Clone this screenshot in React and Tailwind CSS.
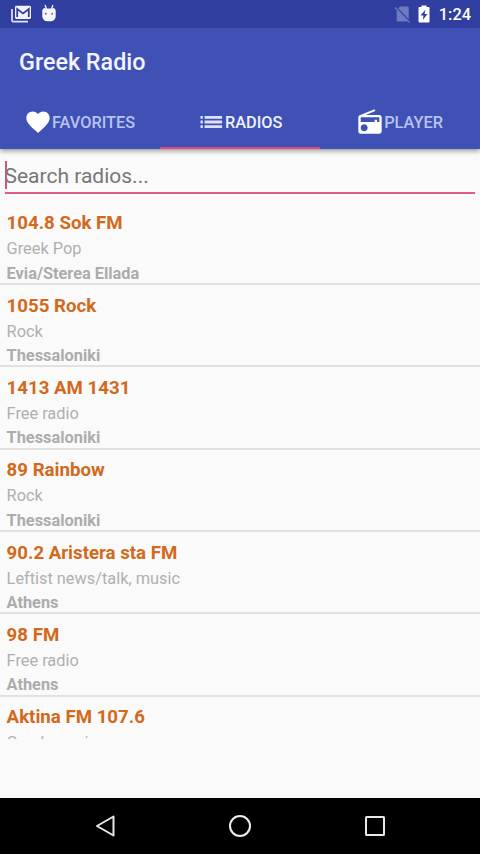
const stations = [
  ["104.8 Sok FM", "Greek Pop", "Evia/Sterea Ellada"],
  ["1055 Rock", "Rock", "Thessaloniki"],
  ["1413 AM 1431", "Free radio", "Thessaloniki"],
  ["89 Rainbow", "Rock", "Thessaloniki"],
  ["90.2 Aristera sta FM", "Leftist news/talk, music", "Athens"],
  ["98 FM", "Free radio", "Athens"],
  ["Aktina FM 107.6", "Greek music"],
];

const tabs = [
  {
    label: "FAVORITES",
    path: "M12 21.35l-1.45-1.32C5.4 15.36 2 12.28 2 8.5 2 5.42 4.42 3 7.5 3c1.74 0 3.41.81 4.5 2.09C13.09 3.81 14.76 3 16.5 3 19.58 3 22 5.42 22 8.5c0 3.78-3.4 6.86-8.55 11.54L12 21.35z",
  },
  {
    label: "RADIOS",
    active: true,
    path: "M3 13.200h2v-2.400H3v2.400zm0 4h2v-2.400H3v2.400zm0-8h2V6.800H3v2.400zm3.500 4h15v-2.400h-15v2.400zm0 4h15v-2.400h-15v2.400zm0-10.400v2.400h15V6.800h-15z",
  },
  {
    label: "PLAYER",
    path: "M3.24 6.15C2.51 6.43 2 7.17 2 8v12c0 1.1.89 2 2 2h16c1.11 0 2-.9 2-2V8c0-1.11-.89-2-2-2H8.3l8.26-3.34L15.88 1 3.24 6.15zM7 20c-1.66 0-3-1.34-3-3s1.34-3 3-3 3 1.34 3 3-1.34 3-3 3zm13-8h-2v-2h-2v2H4V8h16v4z",
  },
];

function StatusBar() {
  return (
    <div className="flex h-7 items-center bg-[#303f9f] pl-[11px] pr-[9px] text-white">
      <svg className="h-[18px] w-5" viewBox="0 0 20 18" fill="none">
        <path d="M1 4v11.5a1.2 1.2 0 0 0 1.2 1.2H17" stroke="#dfe3f7" strokeWidth="1.7" />
        <rect x="4" y="0.8" width="16" height="13.2" rx="1.4" fill="#f1f3fc" />
        <path d="M6.2 12V4l5.8 4.4L17.800 4v8" stroke="#303f9f" strokeWidth="1.8" />
      </svg>
      <svg className="-mt-[2px] ml-[10px] h-[18px] w-4" viewBox="0 0 16 18">
        <path d="M4 1l1.500 4M12 1l-1.500 4" stroke="#f1f3fc" strokeWidth="1.3" />
        <path d="M1.300 6L3 4l2 .500h6L13 4l1.700 2v6.500a5 5 0 0 1-5 4.800H6.300a5 5 0 0 1-5-4.800z" fill="#f4f5fd" />
        <circle cx="4.800" cy="9.800" r="1" fill="#8c6074" />
        <circle cx="11.200" cy="9.800" r="1" fill="#8c6074" />
      </svg>
      <div className="flex-1" />
      <svg className="-ml-[2px] mr-[2px] h-[18px] w-[17px]" viewBox="0 0 17 18">
        <path d="M6 1.500h7.500a1.200 1.200 0 0 1 1.200 1.200v11.500L4.200 3.300zM2.700 4.500L13.800 16.500H3.900a1.200 1.200 0 0 1-1.200-1.200z" fill="#6f7abf" />
        <path d="M1 2.500l14.500 15" stroke="#6f7abf" strokeWidth="1.200" />
      </svg>
      <svg className="ml-[5px] mr-px h-[18px] w-3" viewBox="0 0 12 18">
        <path d="M3.500 2V0.500h5V2h2a1 1 0 0 1 1 1v13.500a1 1 0 0 1-1 1h-9a1 1 0 0 1-1-1V3a1 1 0 0 1 1-1z" fill="white" />
        <path d="M7.500 4.500L2.500 10.500h3L4.800 15l4.700-6h-3z" fill="#303f9f" />
      </svg>
      <span className="ml-2 mt-[2px] text-[16.330px] font-medium leading-none">1:24</span>
    </div>
  );
}

function Station({ station }) {
  const [name, genre, place] = station;
  return (
    <li className="h-[82.350px] shrink-0 border-b-2 border-[#e1e1e1] pl-[6.600px] last:border-b-0">
      <div className="pt-[9.700px] text-[18.670px] font-bold leading-[22px] text-[#d3691b]">{name}</div>
      <div className="mt-[5px] text-[16.330px] leading-[20px] text-[#b0b0b0]">{genre}</div>
      {place && <div className="mt-[4.400px] text-[16.330px] font-bold leading-[20px] text-[#acacac]">{place}</div>}
    </li>
  );
}

export default function App() {
  return (
    <div className="flex h-[854px] w-[480px] flex-col overflow-hidden bg-[#fafafa] font-['Roboto',sans-serif]">
      <header className="z-10 shrink-0 bg-[#3f51b5] shadow-[0_2px_5px_rgba(0,0,0,0.4)]">
        <StatusBar />
        <h1 className="flex h-[66px] items-center pl-[19px] pt-[2px] text-[23.330px] font-medium text-[#f2f4ff]">Greek Radio</h1>
        <nav className="grid h-[55px] grid-cols-3">
          {tabs.map((tab) => (
            <div
              key={tab.label}
              className={
                tab.active
                  ? "flex items-center justify-center border-b-2 border-[#e0487f] pr-[0.500px] pt-[2px] text-[#eef0ff]"
                  : "flex items-center justify-center border-b-2 border-transparent pr-[0.800px] pt-[2px] text-[#b9c2f0]"
              }
            >
              <svg className={tab.active ? "h-7 w-7 fill-[#dde2ff]" : "h-7 w-7 fill-white"} viewBox="0 0 24 24">
                <path d={tab.path} />
              </svg>
              <span className="mt-[3px] text-[16.330px] font-medium leading-none">{tab.label}</span>
            </div>
          ))}
        </nav>
      </header>
      <div className="mx-[5px] flex h-[45px] shrink-0 items-center border-b-2 border-[#dd5b8a] pt-[8px]">
        <div className="h-[28px] w-[2px] bg-[#d8527f]" />
        <span className="-ml-[2.500px] mt-[4px] text-[21px] leading-none text-[#777]">Search radios...</span>
      </div>
      <ul className="mt-[8.600px] flex h-[536.400px] shrink-0 flex-col overflow-hidden">
        {stations.map((station) => (
          <Station key={station[0]} station={station} />
        ))}
      </ul>
      <footer className="mt-auto flex h-14 shrink-0 items-center justify-between bg-black px-[93px]">
        <svg className="h-6 w-6" viewBox="0 0 24 24" fill="none" stroke="#e8e8e8" strokeWidth="2">
          <path d="M20.500 2.500v19L4 12z" strokeLinejoin="round" />
        </svg>
        <svg className="h-6 w-6" viewBox="0 0 24 24" fill="none" stroke="#f0f0f0" strokeWidth="2">
          <circle cx="12" cy="12" r="10" />
        </svg>
        <svg className="h-6 w-6" viewBox="0 0 24 24" fill="none" stroke="#e8e8e8" strokeWidth="2">
          <rect x="3" y="3" width="18" height="18" rx="0.500" />
        </svg>
      </footer>
    </div>
  );
}
